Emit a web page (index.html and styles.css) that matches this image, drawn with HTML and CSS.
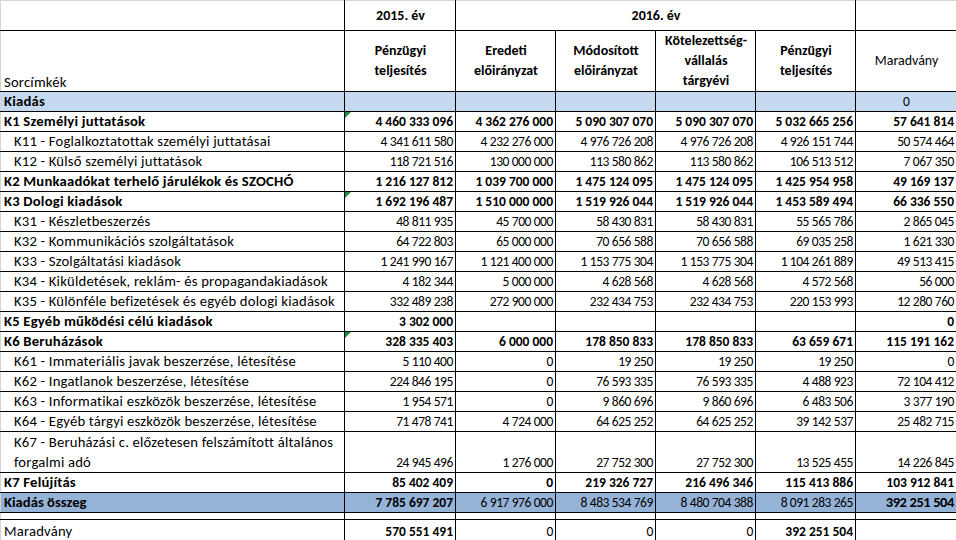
FILE: index.html
```html
<!DOCTYPE html>
<html lang="hu">
<head>
<meta charset="utf-8">
<title>Kiadások</title>
<link rel="stylesheet" href="styles.css">
</head>
<body>
<table class="sheet">
  <colgroup>
    <col class="c-label">
    <col class="c-num2015">
    <col class="c-num">
    <col class="c-num">
    <col class="c-num">
    <col class="c-num">
    <col class="c-last">
  </colgroup>
  <thead>
    <tr class="h1">
      <th class="lbl"></th>
      <th>2015. év</th>
      <th colspan="4">2016. év</th>
      <th></th>
    </tr>
    <tr class="h2">
      <th class="lbl sorcim">Sorcímkék</th>
      <th>Pénzügyi<br>teljesítés</th>
      <th>Eredeti<br>előirányzat</th>
      <th>Módosított<br>előirányzat</th>
      <th>Kötelezettség-<br>vállalás<br>tárgyévi</th>
      <th>Pénzügyi<br>teljesítés</th>
      <th class="normal">Maradvány</th>
    </tr>
  </thead>
  <tbody>
    <tr class="blue b">
      <td class="lbl">Kiadás</td><td></td><td></td><td></td><td></td><td></td><td class="center normal">0</td>
    </tr>
    <tr class="b">
      <td class="lbl">K1 Személyi juttatások</td><td class="flag">4 460 333 096</td><td>4 362 276 000</td><td>5 090 307 070</td><td>5 090 307 070</td><td>5 032 665 256</td><td>57 641 814</td>
    </tr>
    <tr>
      <td class="lbl sub">K11 - Foglalkoztatottak személyi juttatásai</td><td>4 341 611 580</td><td>4 232 276 000</td><td>4 976 726 208</td><td>4 976 726 208</td><td>4 926 151 744</td><td>50 574 464</td>
    </tr>
    <tr>
      <td class="lbl sub">K12 - Külső személyi juttatások</td><td>118 721 516</td><td>130 000 000</td><td>113 580 862</td><td>113 580 862</td><td>106 513 512</td><td>7 067 350</td>
    </tr>
    <tr class="b">
      <td class="lbl">K2 Munkaadókat terhelő járulékok és SZOCHÓ</td><td>1 216 127 812</td><td>1 039 700 000</td><td>1 475 124 095</td><td>1 475 124 095</td><td>1 425 954 958</td><td>49 169 137</td>
    </tr>
    <tr class="b">
      <td class="lbl">K3 Dologi kiadások</td><td class="flag">1 692 196 487</td><td>1 510 000 000</td><td>1 519 926 044</td><td>1 519 926 044</td><td>1 453 589 494</td><td>66 336 550</td>
    </tr>
    <tr>
      <td class="lbl sub">K31 - Készletbeszerzés</td><td>48 811 935</td><td>45 700 000</td><td>58 430 831</td><td>58 430 831</td><td>55 565 786</td><td>2 865 045</td>
    </tr>
    <tr>
      <td class="lbl sub">K32 - Kommunikációs szolgáltatások</td><td>64 722 803</td><td>65 000 000</td><td>70 656 588</td><td>70 656 588</td><td>69 035 258</td><td>1 621 330</td>
    </tr>
    <tr>
      <td class="lbl sub">K33 - Szolgáltatási kiadások</td><td>1 241 990 167</td><td>1 121 400 000</td><td>1 153 775 304</td><td>1 153 775 304</td><td>1 104 261 889</td><td>49 513 415</td>
    </tr>
    <tr>
      <td class="lbl sub">K34 - Kiküldetések, reklám- és propagandakiadások</td><td>4 182 344</td><td>5 000 000</td><td>4 628 568</td><td>4 628 568</td><td>4 572 568</td><td>56 000</td>
    </tr>
    <tr>
      <td class="lbl sub">K35 - Különféle befizetések és egyéb dologi kiadások</td><td>332 489 238</td><td>272 900 000</td><td>232 434 753</td><td>232 434 753</td><td>220 153 993</td><td>12 280 760</td>
    </tr>
    <tr class="b">
      <td class="lbl">K5 Egyéb működési célú kiadások</td><td>3 302 000</td><td></td><td></td><td></td><td></td><td>0</td>
    </tr>
    <tr class="b">
      <td class="lbl">K6 Beruházások</td><td class="flag">328 335 403</td><td>6 000 000</td><td>178 850 833</td><td>178 850 833</td><td>63 659 671</td><td>115 191 162</td>
    </tr>
    <tr>
      <td class="lbl sub">K61 - Immateriális javak beszerzése, létesítése</td><td>5 110 400</td><td>0</td><td>19 250</td><td>19 250</td><td>19 250</td><td>0</td>
    </tr>
    <tr>
      <td class="lbl sub">K62 - Ingatlanok beszerzése, létesítése</td><td>224 846 195</td><td>0</td><td>76 593 335</td><td>76 593 335</td><td>4 488 923</td><td>72 104 412</td>
    </tr>
    <tr>
      <td class="lbl sub">K63 - Informatikai eszközök beszerzése, létesítése</td><td>1 954 571</td><td>0</td><td>9 860 696</td><td>9 860 696</td><td>6 483 506</td><td>3 377 190</td>
    </tr>
    <tr>
      <td class="lbl sub">K64 - Egyéb tárgyi eszközök beszerzése, létesítése</td><td>71 478 741</td><td>4 724 000</td><td>64 625 252</td><td>64 625 252</td><td>39 142 537</td><td>25 482 715</td>
    </tr>
    <tr class="tall">
      <td class="lbl sub wrap">K67 - Beruházási c. előzetesen felszámított általános forgalmi adó</td><td>24 945 496</td><td>1 276 000</td><td>27 752 300</td><td>27 752 300</td><td>13 525 455</td><td>14 226 845</td>
    </tr>
    <tr class="b">
      <td class="lbl">K7 Felújítás</td><td>85 402 409</td><td>0</td><td>219 326 727</td><td>216 496 346</td><td>115 413 886</td><td>103 912 841</td>
    </tr>
    <tr class="total">
      <td class="lbl bold">Kiadás összeg</td><td class="bold">7 785 697 207</td><td>6 917 976 000</td><td>8 483 534 769</td><td>8 480 704 388</td><td>8 091 283 265</td><td class="bold big">392 251 504</td>
    </tr>
    <tr class="gap">
      <td class="lbl"></td><td></td><td></td><td></td><td></td><td></td><td></td>
    </tr>
    <tr class="rest">
      <td class="lbl">Maradvány</td><td class="bold">570 551 491</td><td>0</td><td>0</td><td>0</td><td class="bold">392 251 504</td><td></td>
    </tr>
  </tbody>
</table>
</body>
</html>
```

FILE: styles.css
```css
html, body {
  margin: 0;
  padding: 0;
  background: #ffffff;
}

body {
  font-family: Carlito, Calibri, Lato, "Liberation Sans", sans-serif;
  font-size: 14px;
  color: #000000;
}

.sheet {
  border-collapse: collapse;
  table-layout: fixed;
  width: 956px;
  border-top: 1px solid #d4d4d4;
}

.c-label { width: 344px; }
.c-num2015 { width: 111px; }
.c-num { width: 100px; }
.c-last { width: 101px; }

.sheet th,
.sheet td {
  border: 1px solid #000000;
  padding: 0 2px 0 3px;
  white-space: nowrap;
  overflow: hidden;
  line-height: 19px;
}

.sheet td {
  text-align: right;
  vertical-align: bottom;
  height: 19px;
  font-size: 13.5px;
  letter-spacing: -0.4px;
}

.b td,
.sheet td.bold {
  font-weight: 700;
  letter-spacing: 0;
}

.sheet th {
  font-weight: 700;
  text-align: center;
  vertical-align: middle;
}

.sheet .lbl {
  border-left: 1px solid #d4d4d4;
  text-align: left;
  font-size: 14.67px;
  letter-spacing: 0.2px;
}

.h1 th {
  height: 29px;
  border-top: none;
}

.h2 th {
  height: 59px;
  line-height: 20px;
}

.h2 .sorcim {
  font-weight: 400;
  vertical-align: bottom;
  line-height: 18px;
}

.sheet th.normal,
.sheet td.normal {
  font-weight: 400;
}

.sheet td.center {
  text-align: center;
}

.sheet .sub {
  padding-left: 13px;
}

.sheet td.wrap {
  white-space: normal;
  line-height: 20px;
}

.tall td {
  height: 39px;
}

.blue td {
  background: #c5d9f1;
}

.total td {
  background: #95b3d7;
}

.sheet td.big {
  font-size: 14.5px;
  letter-spacing: -0.4px;
}

.gap td {
  height: 6px;
  line-height: 6px;
}

.rest td {
  height: 21px;
}

.flag {
  position: relative;
}

.flag::before {
  content: "";
  position: absolute;
  left: 0;
  top: 0;
  border-top: 6px solid #1e8a3c;
  border-right: 6px solid transparent;
}
```
